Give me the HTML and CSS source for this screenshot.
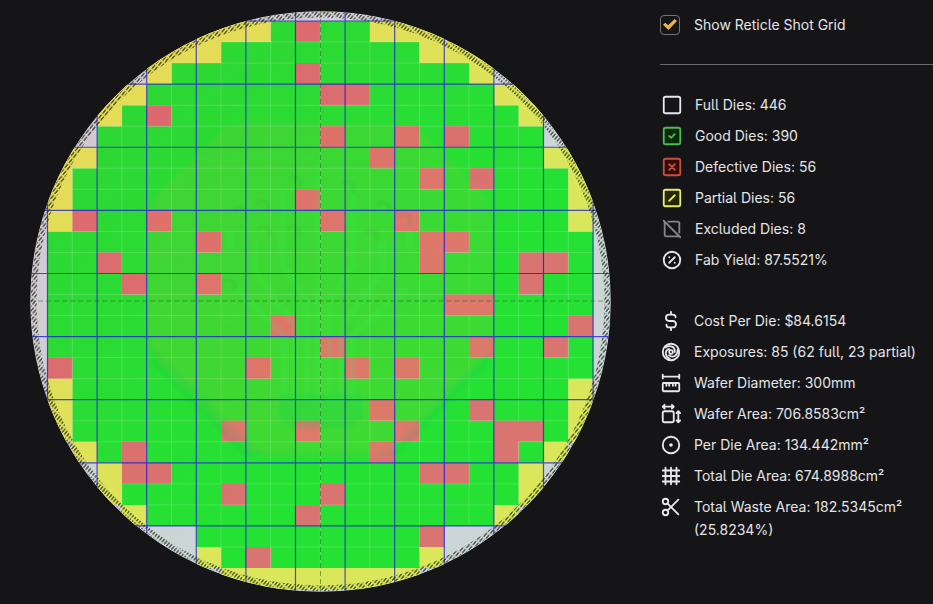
FILE: index.html
```html
<!DOCTYPE html>
<html lang="en">
<head>
<meta charset="utf-8">
<title>Die Yield</title>
<link rel="stylesheet" href="styles.css">
</head>
<body>
<main class="layout">
  <svg class="wafer" viewBox="0 0 5810 5810" role="img" aria-label="Wafer map">
    <defs>
      <clipPath id="disc"><circle cx="2905" cy="2905" r="2903"/></clipPath>
      <linearGradient id="blank" gradientUnits="userSpaceOnUse" x1="900" y1="900" x2="3500" y2="3500"><stop offset="0" stop-color="#d2cad3"/><stop offset="1" stop-color="#ccd6d6"/></linearGradient>
      <linearGradient id="good" gradientUnits="userSpaceOnUse" x1="900" y1="900" x2="3500" y2="3500"><stop offset="0" stop-color="#2ed734"/><stop offset="1" stop-color="#25e133"/></linearGradient>
      <linearGradient id="defective" gradientUnits="userSpaceOnUse" x1="900" y1="900" x2="3500" y2="3500"><stop offset="0" stop-color="#dd686e"/><stop offset="1" stop-color="#d87570"/></linearGradient>
      <linearGradient id="partial" gradientUnits="userSpaceOnUse" x1="900" y1="900" x2="3500" y2="3500"><stop offset="0" stop-color="#e5db57"/><stop offset="1" stop-color="#dae75b"/></linearGradient>
      <linearGradient id="emblem" x1="0" y1="0" x2="0" y2="1"><stop offset="0" stop-color="#ff9e38" stop-opacity=".08"/><stop offset="1" stop-color="#ff9e38" stop-opacity=".12"/></linearGradient>
      <filter id="soft"><feGaussianBlur stdDeviation="14"/></filter>
      <pattern id="hatch" width="30" height="66" patternUnits="userSpaceOnUse" patternTransform="rotate(40)"><path d="M15 4V54" stroke="#222a18" stroke-width="12" stroke-opacity=".9"/></pattern>
    </defs>
    <g clip-path="url(#disc)">
      <circle cx="2905" cy="2905" r="2905" fill="url(#blank)"/>
      <g id="dies"></g>
      <g filter="url(#soft)">
        <path fill="url(#emblem)" d="M2150 1130H3680Q3850 1130 3960 1240L4490 1770Q4620 1900 4620 2080V3260Q4620 3400 4510 3510L3640 4380Q3570 4450 3440 4450H2380Q2230 4450 2130 4350L1290 3510Q1190 3400 1190 3260V2080Q1190 1920 1300 1810L1880 1240Q1990 1130 2150 1130Z"/>
        <path class="emblem-shadow" d="M1220 3340L2170 4290Q2290 4410 2450 4410H3400Q3570 4410 3660 4310L4580 3390V3540L3680 4440H2130L1220 3540Z"/>
        <path class="emblem-base" d="M2480 3820H3340V4080L3180 4180H2640L2480 4080Z"/>
        <path class="emblem-lines" d="M2540 3900V3250L2060 2780M2650 3900V3150L2250 2600V2300M2770 3900V2900L2530 2540V1800M2880 3900V1550M2990 3900V2900L3230 2540V1800M3110 3900V3150L3530 2600V2300M3220 3900V3250L3740 2780M2000 2420V2200M3800 2420V2200"/>
        <path class="emblem-dots" d="M2040 2000a65 65 0 1 1 100 80M2260 1930a65 65 0 1 1 100 80M2580 1690a65 65 0 1 1 100 80M3120 1740a65 65 0 1 1 100 80M3470 1950a65 65 0 1 1 100 80M3680 2060a65 65 0 1 1 100 80M2280 2190a65 65 0 1 1 100 80M3350 2220a65 65 0 1 1 100 80M1930 2720a65 65 0 1 1 100 80M2570 2190a65 65 0 1 1 100 80"/>
      </g>
      <path id="shots" class="shots"/>
      <path class="axes" d="M2905 0V5810M0 2900H5810"/>
      <circle class="edge" cx="2905" cy="2905" r="2868"/>
    </g>
  </svg>

  <section class="panel" aria-label="Results">
    <label class="toggle"><input type="checkbox" checked><span>Show Reticle Shot Grid</span></label>
    <hr>
    <ul class="stats dies">
      <li><svg viewBox="0 0 24 24"><rect x="3" y="3" width="18" height="18" rx="2"/></svg><span>Full Dies: 446</span></li>
      <li class="is-good"><svg viewBox="0 0 24 24"><rect x="3" y="3" width="18" height="18" rx="2"/><path d="M9 12l2 2 4-4"/></svg><span>Good Dies: 390</span></li>
      <li class="is-defective"><svg viewBox="0 0 24 24"><rect x="3" y="3" width="18" height="18" rx="2"/><path d="M9 9l6 6M15 9l-6 6"/></svg><span>Defective Dies: 56</span></li>
      <li class="is-partial"><svg viewBox="0 0 24 24"><rect x="3" y="3" width="18" height="18" rx="2"/><path d="M9 15l6-6"/></svg><span>Partial Dies: 56</span></li>
      <li class="is-excluded"><svg viewBox="0 0 24 24"><path d="M8 4h10a2 2 0 0 1 2 2v10M20 20H6a2 2 0 0 1-2-2V4M3 3l18 18"/></svg><span>Excluded Dies: 8</span></li>
      <li><svg viewBox="0 0 24 24"><circle cx="12" cy="12" r="9"/><path d="M9 15l6-6M9 9h.01M15 15h.01"/></svg><span>Fab Yield: 87.5521%</span></li>
    </ul>
    <ul class="stats">
      <li><svg viewBox="0 0 24 24"><path d="M17 8a3 3 0 0 0-3-3h-4a3 3 0 0 0 0 7h4a3 3 0 0 1 0 7h-4a3 3 0 0 1-3-3M12 2v3M12 19v3"/></svg><span>Cost Per Die: $84.6154</span></li>
      <li><svg viewBox="0 0 24 24"><circle cx="12" cy="12" r="9"/><circle cx="12" cy="12" r="2"/><path d="M6 7C11 4 17 6 16 12"/><path d="M6 7C11 4 17 6 16 12" transform="rotate(120 12 12)"/><path d="M6 7C11 4 17 6 16 12" transform="rotate(240 12 12)"/></svg><span>Exposures: 85 (62 full, 23 partial)</span></li>
      <li><svg viewBox="0 0 24 24"><path d="M3 5h18M3 3v4M21 3v4M4 12h16a1 1 0 0 1 1 1v7a1 1 0 0 1-1 1H4a1 1 0 0 1-1-1v-7a1 1 0 0 1 1-1zM7 12v3M10 12v3M14 12v3M17 12v3"/></svg><span>Wafer Diameter: 300mm</span></li>
      <li><svg viewBox="0 0 24 24"><rect x="3" y="9" width="12" height="12" rx="2"/><path d="M3 4h12M5 2L3 4l2 2M13 2l2 2-2 2M20 9v12M18 11l2-2 2 2M18 19l2 2 2-2"/></svg><span>Wafer Area: 706.8583cm²</span></li>
      <li><svg viewBox="0 0 24 24"><circle cx="12" cy="12" r="9"/><circle class="dot" cx="12" cy="12" r="1"/></svg><span>Per Die Area: 134.442mm²</span></li>
      <li><svg viewBox="0 0 24 24"><path d="M3 6h18M3 12h18M3 18h18M6 3v18M12 3v18M18 3v18"/></svg><span>Total Die Area: 674.8988cm²</span></li>
      <li><svg viewBox="0 0 24 24"><circle cx="6" cy="6" r="3"/><circle cx="6" cy="18" r="3"/><path d="M8.600 8.600L20 20M8.600 15.400L20 4"/></svg><span>Total Waste Area: 182.5345cm² (25.8234%)</span></li>
    </ul>
  </section>
</main>
<script src="wafer.js"></script>
</body>
</html>
```
FILE: styles.css
```css
* { box-sizing: border-box; }
body {
  margin: 0;
  background: #151518;
  color: #e4e4e6;
  font: 14px/23px Inter, "Liberation Sans", sans-serif;
  font-feature-settings: "cv05";
}
.layout {
  display: grid;
  grid-template-columns: minmax(0, 1fr) 273px;
  column-gap: 49px;
  align-items: start;
  padding: 11px 0 0 30px;
}
.wafer { display: block; width: 100%; }
.die-good { fill: url(#good); }
.die-defective { fill: url(#defective); }
.die-partial { fill: url(#partial); }
.scribe { fill: none; stroke: #d8f0c8; stroke-opacity: .25; stroke-width: 9; }
.shots { fill: none; stroke: #0a0ad8; stroke-opacity: .7; stroke-width: 12; }
.axes { stroke: #175c1a; stroke-opacity: .55; stroke-width: 9; stroke-dasharray: 50 30; }
.edge { fill: none; stroke: url(#hatch); stroke-width: 58; }
.emblem-shadow { fill: #00b060; fill-opacity: .1; }
.emblem-base { fill: #00d05a; fill-opacity: .16; }
.emblem-lines { fill: none; stroke: #20ff60; stroke-opacity: .16; stroke-width: 46; }
.emblem-dots { fill: none; stroke: #009a50; stroke-opacity: .22; stroke-width: 24; }

.panel { padding-top: 2px; }
.toggle { display: flex; align-items: center; gap: 14px; }
.toggle input {
  appearance: none;
  display: grid;
  place-items: center;
  width: 20px;
  height: 20px;
  margin: 0;
  border: 1px solid #737377;
  border-radius: 4px;
}
.toggle input:checked::before {
  content: "";
  width: 14px;
  height: 11px;
  background: #f5b13d;
  clip-path: polygon(0 52%, 16% 34%, 37% 57%, 83% 0, 100% 18%, 39% 100%);
}
hr { height: 1px; margin: 28px 0; border: 0; background: #6d6d70; }
.stats {
  display: grid;
  gap: 8px;
  margin: 0 0 38px;
  padding: 0;
  list-style: none;
}
.stats.dies { padding-left: 1px; }
.stats li { display: flex; gap: 12px; }
.stats svg {
  flex: none;
  width: 22px;
  height: 22px;
  margin-top: 1px;
  fill: none;
  stroke: #e8e8ea;
  stroke-width: 2;
  stroke-linecap: round;
  stroke-linejoin: round;
}
.stats .dot { fill: #e8e8ea; }
.stats .is-good svg { stroke: #4fb956; }
.stats .is-good rect { fill: #062a08; }
.stats .is-defective svg { stroke: #c9503f; }
.stats .is-defective rect { fill: #300b0b; }
.stats .is-partial svg { stroke: #e6ed68; }
.stats .is-partial rect { fill: #252800; }
.stats .is-excluded svg { stroke: #858589; }
```
FILE: wafer.js
```js
// One string per die row: g good, x defective, p partial, "." no die.
const rows = [
  "......pppgxggppp......",
  "....pppggggggggppp....",
  "....pgggggxggggggp....",
  "..ppgggggggxxgggggpp..",
  "..pgxggggggggggggggp..",
  "..gggggggggxggxgxggg..",
  "ppgggggggggggxggggggpp",
  "pggggggggggggggxgxgggp",
  "pgggggggggxggggggggggp",
  "pxggxggggggxggxggggggp",
  "ggggggxggggggggxxggggg",
  "ggxggggggggggggxgggxxg",
  "gggxggxggggggggggggxgg",
  "ggggggggggggggggxxgggg",
  "gggggggggxgggggggggggx",
  "gggggggggggxgggggxggxg",
  "xgggggggxgggxgxggggggg",
  "pggggggggggggggggggggp",
  "pggggggggggggxgggxgggp",
  "pggggggxggxgggxgggxxgp",
  ".pgxgggggggggxggggxgp.",
  "..pxxggggggggggxxggp..",
  "..pggggxgggxgggggggp..",
  "...pggggggxgggggggp...",
  "......gggggggggx......",
  "......pgxggggggp......",
  ".......pppppppp......."
];
const svgNS = "http://www.w3.org/2000/svg";
const kinds = { g: "good", x: "defective", p: "partial" };
const left = 175, top0 = 100, dieW = 248, dieH = 210.4;
const dies = document.getElementById("dies");
const paths = { g: "", x: "", p: "" };
let scribe = "";

rows.forEach((row, r) => {
  [...row].forEach((kind, c) => {
    if (kind === ".") return;
    const x = left + c * dieW, y = top0 + r * dieH;
    paths[kind] += `M${x} ${y}h${dieW}v${dieH}h${-dieW}z`;
    if (kind === "g") scribe += `M${x} ${y + dieH}V${y}H${x + dieW}`;
  });
});

function addPath(d, name) {
  const path = document.createElementNS(svgNS, "path");
  path.setAttribute("d", d);
  path.setAttribute("class", name);
  dies.append(path);
}
for (const kind in paths) addPath(paths[kind], "die-" + kinds[kind]);
addPath(scribe, "scribe");

let shots = "";
for (let c = 0; c <= 22; c += 2) shots += `M${left + c * dieW} 0V5810`;
for (let r = 0; r <= 24; r += 3) shots += `M0 ${top0 + r * dieH}H5810`;
document.getElementById("shots").setAttribute("d", shots);
```
